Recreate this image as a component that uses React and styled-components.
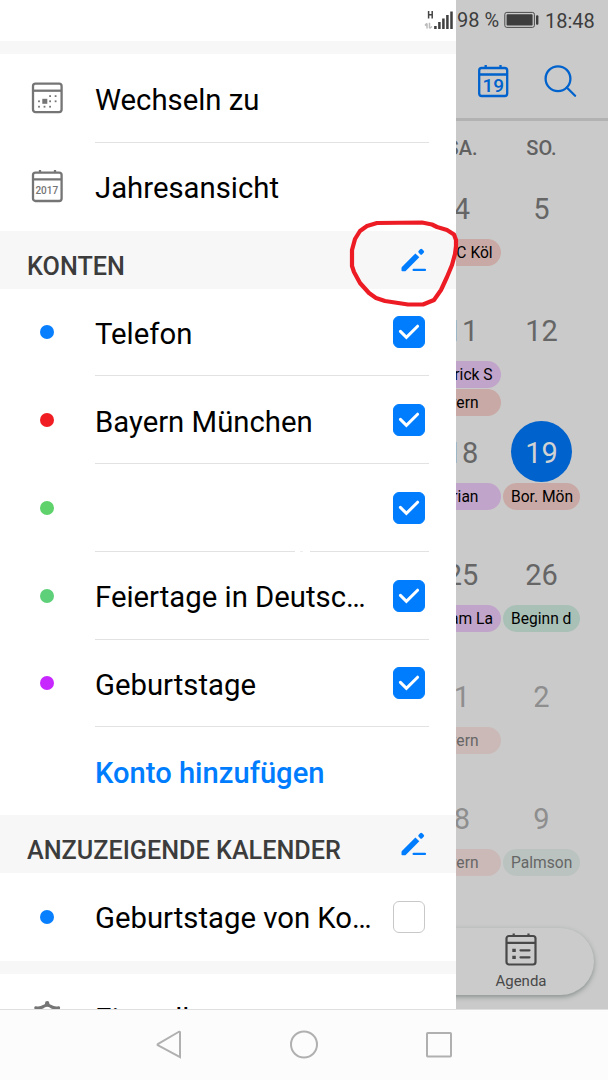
import React from 'react';
import styled, { createGlobalStyle } from 'styled-components';

const GlobalStyle = createGlobalStyle`
  * {
    box-sizing: border-box;
  }

  body {
    margin: 0;
    background: #fff;
    font-family: Roboto, sans-serif;
  }

  svg {
    display: block;
    flex: none;
  }
`;

const Phone = styled.div`
  position: relative;
  display: flex;
  flex-direction: column;
  width: 608px;
  height: 1080px;
  overflow: hidden;
`;

const Main = styled.main`
  display: grid;
  grid-template-columns: 456px 152px;
  height: 1009px;
  overflow: hidden;
`;

/* Drawer */

const Drawer = styled.aside`
  height: 1009px;
  overflow: hidden;
  background: #fff;
`;

const SignalBar = styled.div`
  display: flex;
  justify-content: flex-end;
  height: 41px;
  padding: 9px 2px 0 0;
`;

const Band = styled.div`
  height: 13px;
  background: #f7f7f7;
`;

const Row = styled.div`
  display: flex;
  height: ${({ $tall }) => ($tall ? '88.75px' : '87.75px')};
`;

const RowIcon = styled.div`
  display: flex;
  align-items: center;
  justify-content: center;
  width: 95px;
  padding: 0 1px 1px 0;
`;

const RowBody = styled.div`
  display: flex;
  align-items: center;
  justify-content: space-between;
  width: 334px;
  padding-right: 4px;
  border-bottom: 1px solid ${({ $last }) => ($last ? 'transparent' : '#e2e2e2')};
  ${({ $broken }) => $broken && `
    border-image: linear-gradient(
      to right,
      #e2e2e2 200px, #fff 200px, #fff 205px, #ededed 205px,
      #ededed 208px, #fff 208px, #fff 215px, #e2e2e2 215px
    ) 1;
  `}
`;

const RowLabel = styled.span`
  padding-top: 4px;
  font-size: 29.3px;
  line-height: 36px;
  white-space: nowrap;
  color: #000;
`;

const AddLink = styled(RowLabel)`
  font-size: 29.15px;
  font-weight: 500;
  color: #007dff;
`;

const Dot = styled.span`
  width: 14px;
  height: 14px;
  margin-top: 1px;
  border-radius: 50%;
  background: ${({ $color }) => $color};
`;

const Checkbox = styled.span`
  display: flex;
  align-items: center;
  justify-content: center;
  flex: none;
  width: 32px;
  height: 32px;
  margin-top: 1px;
  border: 1px solid ${({ $checked }) => ($checked ? '#007dff' : '#c8c8c8')};
  border-radius: 6px;
  background: ${({ $checked }) => ($checked ? '#007dff' : '#fff')};
`;

const SectionHeader = styled.h2`
  display: flex;
  justify-content: space-between;
  height: 58px;
  margin: 0;
  padding: 17px 29px 0 27px;
  background: #f7f7f7;
  color: #3c3c3c;
  font-size: 25.2px;
  font-weight: 500;
  line-height: 37px;
  white-space: nowrap;
`;

/* Dimmed calendar page */

const Page = styled.section`
  height: 1009px;
  overflow: hidden;
  background: #cacaca;
`;

const StatusBar = styled.div`
  display: flex;
  align-items: flex-start;
  height: 41px;
  padding: 9px 0 0 1px;
  font-size: 20px;
  line-height: 22px;
  color: #3d3d3d;
`;

const BatteryLevel = styled.span`
  width: 47px;
  white-space: nowrap;
`;

const Clock = styled.span`
  padding: 1px 0 0 6px;
`;

const Toolbar = styled.div`
  display: flex;
  gap: 35px;
  height: 80px;
  padding: 23px 0 0 21px;
  border-bottom: 3px solid #b2b2b2;
`;

const WeekGrid = styled.div`
  display: grid;
  grid-template-columns: 78px 77px;
  column-gap: 2px;
  width: 157px;
  margin-left: -33px;
`;

const Weekday = styled.div`
  height: 56px;
  padding-top: 16px;
  font-size: 20px;
  font-weight: 500;
  line-height: 22px;
  text-align: center;
  color: #616161;
`;

const Day = styled.div`
  display: flex;
  flex-direction: column;
  align-items: center;
  height: 122px;
`;

const DayNumber = styled.div`
  display: flex;
  align-items: center;
  justify-content: center;
  flex: none;
  width: 61px;
  height: 61px;
  margin-bottom: 1px;
  padding-top: 3px;
  border-radius: 50%;
  background: ${({ $today }) => ($today ? '#0062cc' : 'transparent')};
  color: ${({ $today, $faded }) => ($today && '#d2d2d2') || ($faded ? '#8e8e8e' : '#666')};
  font-size: 29px;
`;

const eventColors = {
  red: ['#c9a9a5', '#cbb9b7'],
  purple: ['#c1a4ca', '#c5b7ca'],
  green: ['#a9c0b7', '#bac3c0'],
};

const EventPill = styled.div`
  flex: none;
  width: 100%;
  height: 27px;
  margin-bottom: 1px;
  padding-left: 8px;
  border-radius: 14px;
  background: ${({ $color, $faded }) => eventColors[$color][$faded ? 1 : 0]};
  color: ${({ $faded }) => ($faded ? '#666' : '#000')};
  font-size: 15.6px;
  line-height: 28px;
  white-space: nowrap;
  overflow: hidden;
`;

const TabBar = styled.div`
  display: flex;
  flex-direction: column;
  align-items: center;
  width: 162px;
  height: 67px;
  margin: 19px 0 0 -24px;
  padding: 5px 0 0 16px;
  border-radius: 0 34px 34px 0;
  background: #cbcbcb;
  box-shadow: 0 2px 5px rgba(60, 80, 75, 0.45);
`;

const TabLabel = styled.span`
  margin-top: 5px;
  font-size: 15px;
  line-height: 21px;
  color: #484848;
`;

const NavBar = styled.nav`
  display: flex;
  justify-content: center;
  gap: 107px;
  height: 71px;
  padding-top: 20px;
  border-top: 1px solid #dfdfdf;
  background: #fcfcfc;
`;

/* Freehand marker lies over both the drawer and the page */
const Marker = styled.svg`
  position: absolute;
  top: 0;
  left: 0;
  pointer-events: none;
`;

const SignalIcon = () => (
  <svg width="30" height="22" viewBox="0 0 30 22">
    <path d="M4.6 2v7.6M8.2 2v7.6M4.6 5.8h3.6" stroke="#444" strokeWidth="1.5" fill="none" />
    <path d="M3 19.5v-5M1 16.5l2-2.3M5.5 13.8v5.5M5.5 19.5l2.5-2" stroke="#bbb" strokeWidth="1.5" fill="none" />
    <path d="M11.4 20v-3M15.4 20v-7M19.4 20V9.5M23.4 20V6M27.5 20V2.5" stroke="#404040" strokeWidth="2.5" />
  </svg>
);

const BatteryIcon = () => (
  <svg width="35" height="22" viewBox="0 0 35 22">
    <rect x="0.8" y="3.4" width="29.6" height="15" rx="2" fill="none" stroke="#4a4a4a" strokeWidth="1" />
    <rect x="2.6" y="5.2" width="26" height="11.4" rx="0.8" fill="#3d3d3d" />
    <rect x="32" y="6.2" width="2.4" height="9.6" rx="1" fill="#3d3d3d" />
  </svg>
);

const TodayIcon = () => (
  <svg width="32" height="34" viewBox="0 0 32 34" fill="none" stroke="#0062cc" strokeWidth="2.3">
    <rect x="2.2" y="4" width="28" height="28" rx="2.5" />
    <path d="M2 10.5h28M8.7 1v3M23.5 1v3" />
    <text x="16.2" y="28" textAnchor="middle" fontSize="19" fontWeight="500" fill="#0062cc" stroke="none">19</text>
  </svg>
);

const SearchIcon = () => (
  <svg width="33" height="34" viewBox="0 0 33 34" fill="none" stroke="#0062cc" strokeWidth="2.3">
    <circle cx="14" cy="14.7" r="12.4" />
    <path d="M22.8 23.5l8.3 8.3" strokeLinecap="round" />
  </svg>
);

const GotoIcon = () => (
  <svg width="32" height="32" viewBox="-0.5 0 32 32" fill="none" stroke="#757575" strokeWidth="2.3">
    <rect x="1.5" y="1.7" width="28.6" height="28.4" rx="2.5" />
    <path d="M1.5 8.7h28.6" />
    <g fill="#757575" stroke="none">
      <rect x="10.8" y="16.8" width="5" height="5" />
      {[[17.7, 13.2], [23.2, 13.2], [6.6, 18.4], [17.7, 18.4], [23.2, 18.4], [6.6, 23.8], [12.1, 23.8], [17.7, 23.8]].map(([x, y]) => (
        <rect key={`${x}-${y}`} x={x} y={y} width="1.8" height="1.8" />
      ))}
    </g>
  </svg>
);

const YearIcon = () => (
  <svg width="32" height="34" viewBox="-0.5 0 32 34" fill="none" stroke="#757575" strokeWidth="2.3">
    <rect x="1.5" y="3.6" width="28.6" height="28.4" rx="2.5" />
    <path d="M1.5 10.3h28.6M8.5 1v3M23.5 1v3" />
    <text x="15.3" y="25" textAnchor="middle" fontSize="10" fontWeight="500" fill="#757575" stroke="none">2017</text>
  </svg>
);

const AgendaIcon = () => (
  <svg width="32" height="33" viewBox="0 0 32 33" fill="none" stroke="#484848" strokeWidth="2.2">
    <rect x="1.5" y="3" width="29" height="28.5" rx="2.5" />
    <path d="M1.5 9.8h29M8.7 0.5v3M23.5 0.5v3" />
    <path d="M7.3 17.3h3.5M7.3 24.3h3.5" strokeWidth="3.2" />
    <path d="M15.5 17.3h9M15.5 24.3h9" strokeLinecap="round" />
  </svg>
);

const GearIcon = () => (
  <svg width="34" height="34" viewBox="-0.2 0 34 34" fill="none" stroke="#757575" strokeWidth="3" strokeLinejoin="round">
    <path d="M5.6 7.8Q10.5 8.6 13.6 6.2Q17 4.2 20.4 6.2Q23.5 8.6 28.4 7.8Q27 13 27.6 17Q27 21 28.4 26.2Q23.5 25.4 20.4 27.8Q17 29.8 13.6 27.8Q10.5 25.4 5.6 26.2Q7 21 6.4 17Q7 13 5.6 7.8z" />
    <path d="M17 3.2v.8M17 30v.8" strokeWidth="4.4" strokeLinecap="round" />
    <circle cx="17" cy="17" r="5" />
  </svg>
);

const PencilIcon = () => (
  <svg width="26" height="26" viewBox="0 -0.5 26 26" fill="#007dff">
    <path d="M14.4 4.9l3.9 3.9L4.7 22.4q-.4.4-1 .4H1.3q-.8 0-.8-.8v-2.4q0-.6.4-1z" />
    <rect x="17.7" y="0.7" width="5" height="5" rx="1.5" transform="rotate(45 20.2 3.2)" />
    <path d="M12.6 21.4h11.4" stroke="#007dff" strokeWidth="2.2" strokeLinecap="round" />
  </svg>
);

const CheckIcon = () => (
  <svg width="22" height="18" viewBox="0 0 22 18" fill="none" stroke="#fff" strokeWidth="3">
    <path d="M2.4 8.4l6 6L19.6 3.2" strokeLinecap="round" />
  </svg>
);

const accounts = [
  { name: 'Telefon', color: '#087fff' },
  { name: 'Bayern München', color: '#f01d22' },
  { name: '', color: '#5fd26b', broken: true },
  { name: 'Feiertage in Deutsc…', color: '#5fd07a' },
  { name: 'Geburtstage', color: '#c728ff' },
];

const days = [
  { day: 4, events: [['1. FC Köl', 'red']] },
  { day: 5 },
  { day: 11, events: [['Patrick S', 'purple'], ['Bayern', 'red']] },
  { day: 12 },
  { day: 18, events: [['Florian', 'purple']] },
  { day: 19, today: true, events: [['Bor. Mön', 'red']] },
  { day: 25, events: [['Adam La', 'purple']] },
  { day: 26, events: [['Beginn d', 'green']] },
  { day: 1, faded: true, events: [['Bayern', 'red']] },
  { day: 2, faded: true },
  { day: 8, faded: true, events: [['Bayern', 'red']] },
  { day: 9, faded: true, events: [['Palmson', 'green']] },
];

const CalendarRow = ({ name, color, checked, broken }) => (
  <Row>
    <RowIcon><Dot $color={color} /></RowIcon>
    <RowBody $last={!checked} $broken={broken}>
      <RowLabel>{name}</RowLabel>
      <Checkbox $checked={checked}>{checked && <CheckIcon />}</Checkbox>
    </RowBody>
  </Row>
);

const App = () => {
  return (
    <Phone>
      <GlobalStyle />
      <Main>
        <Drawer>
          <SignalBar><SignalIcon /></SignalBar>
          <Band />
          <Row $tall>
            <RowIcon><GotoIcon /></RowIcon>
            <RowBody><RowLabel>Wechseln zu</RowLabel></RowBody>
          </Row>
          <Row>
            <RowIcon><YearIcon /></RowIcon>
            <RowBody $last><RowLabel>Jahresansicht</RowLabel></RowBody>
          </Row>
          <SectionHeader>
            KONTEN
            <PencilIcon />
          </SectionHeader>
          {accounts.map((account) => (
            <CalendarRow key={account.color} {...account} checked />
          ))}
          <Row>
            <RowIcon />
            <RowBody $last><AddLink>Konto hinzufügen</AddLink></RowBody>
          </Row>
          <SectionHeader>
            ANZUZEIGENDE KALENDER
            <PencilIcon />
          </SectionHeader>
          <CalendarRow name="Geburtstage von Ko…" color="#087fff" checked={false} />
          <Band />
          <Row>
            <RowIcon><GearIcon /></RowIcon>
            <RowBody $last><RowLabel>Einstellungen</RowLabel></RowBody>
          </Row>
        </Drawer>

        <Page>
          <StatusBar>
            <BatteryLevel>98 %</BatteryLevel>
            <BatteryIcon />
            <Clock>18:48</Clock>
          </StatusBar>
          <Toolbar>
            <TodayIcon />
            <SearchIcon />
          </Toolbar>
          <WeekGrid>
            <Weekday>SA.</Weekday>
            <Weekday>SO.</Weekday>
            {days.map(({ day, today, faded, events = [] }) => (
              <Day key={day}>
                <DayNumber $today={today} $faded={faded}>{day}</DayNumber>
                {events.map(([title, color]) => (
                  <EventPill key={title} $color={color} $faded={faded}>{title}</EventPill>
                ))}
              </Day>
            ))}
          </WeekGrid>
          <TabBar>
            <AgendaIcon />
            <TabLabel>Agenda</TabLabel>
          </TabBar>
        </Page>
      </Main>

      <NavBar>
        <svg width="28" height="30" viewBox="0 0 28 30" fill="none" stroke="#b0b0b0" strokeWidth="2">
          <path d="M25 2.2v25L3.2 15.5q-1.4-.8 0-1.7L23.5 2q1.5-.8 1.5.2z" />
        </svg>
        <svg width="28" height="30" viewBox="0 0 28 30" fill="none" stroke="#b0b0b0" strokeWidth="2">
          <circle cx="14" cy="14.5" r="13" />
        </svg>
        <svg width="28" height="30" viewBox="0 0 28 30" fill="none" stroke="#b0b0b0" strokeWidth="2">
          <rect x="2" y="3" width="24" height="23.5" rx="0.8" />
        </svg>
      </NavBar>

      <Marker width="608" height="320" viewBox="0 0 608 320" fill="none" stroke="#ed1c24" strokeWidth="4.2" strokeLinejoin="round">
        <path d="M377 223L422 222.5L432 224.5L437 227L447 230L454 234.5L456 240V246L455 254L452 265L447 277L441 290L434 300L423 304.5L408 304.5L385 301L376 298L369 293L360 283L354 272L352 266V250L355 239L360 231L367 226Z" />
      </Marker>
    </Phone>
  );
};

export default App;
